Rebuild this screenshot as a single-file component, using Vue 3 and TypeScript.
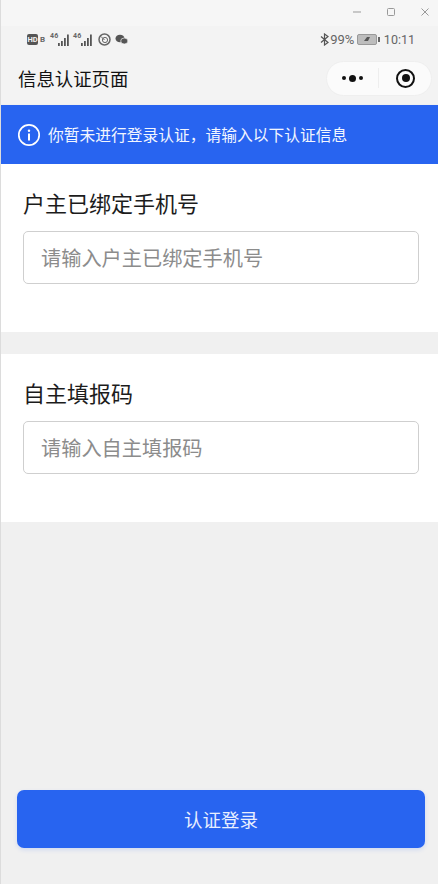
<script setup lang="ts">
const sections = [
  { label: '户主已绑定手机号', placeholder: '请输入户主已绑定手机号' },
  { label: '自主填报码', placeholder: '请输入自主填报码' },
]
</script>

<template>
  <div class="page">
    <div class="winbar">
      <svg class="winicon" width="10" height="10" viewBox="0 0 10 10"><path d="M1 5h8" stroke="#999" fill="none" /></svg>
      <svg class="winicon" width="10" height="10" viewBox="0 0 10 10"><rect x="1.5" y="1.5" width="7" height="7" rx="1" stroke="#999" fill="none" /></svg>
      <svg class="winicon" width="10" height="10" viewBox="0 0 10 10"><path d="M1.5 1.5l7 7M8.5 1.5l-7 7" stroke="#999" fill="none" /></svg>
    </div>

    <div class="status">
      <div class="status-left">
        <span class="hd">HD</span>
        <span class="b">B</span>
        <span class="signal">
          <span class="net">46</span>
          <svg width="13" height="13" viewBox="0 0 13 13"><path d="M1 10h1.800v3H1zM4 8h1.800v5H4zM7 5h1.800v8H7zM10 1.500h1.800V13H10z" fill="#555" /></svg>
        </span>
        <span class="signal">
          <span class="net">46</span>
          <svg width="13" height="13" viewBox="0 0 13 13"><path d="M1 10h1.800v3H1zM4 8h1.800v5H4zM7 5h1.800v8H7zM10 1.500h1.800V13H10z" fill="#555" /></svg>
        </span>
        <svg class="ic-a" width="13" height="13" viewBox="0 0 13 13">
          <circle cx="6.500" cy="6.500" r="5.500" fill="none" stroke="#666" stroke-width="1.500" />
          <circle cx="7" cy="7" r="2.600" fill="none" stroke="#666" />
          <path d="M3 3.500l3.500 3.500" stroke="#666" />
        </svg>
        <svg class="ic-w" width="13" height="11" viewBox="0 0 13 11">
          <ellipse cx="5" cy="4.500" rx="4.500" ry="3.800" fill="#555" />
          <ellipse cx="9.300" cy="7" rx="3.600" ry="3" fill="#555" stroke="#f3f3f3" stroke-width=".7" />
        </svg>
      </div>
      <div class="status-right">
        <svg class="bt" width="9" height="13" viewBox="0 0 9 13"><path d="M1 3.500l7 6L4.500 12V1L8 3.500 1 9.500" fill="none" stroke="#555" stroke-width="1.200" /></svg>
        <span class="pct">99%</span>
        <span class="battery"><svg width="8" height="6" viewBox="0 0 8 6"><path d="M1 5L4 1h3L5 5z" fill="#555" /></svg></span>
        <span class="nub"></span>
        <span class="time">10:11</span>
      </div>
    </div>

    <div class="nav">
      <span class="nav-title">信息认证页面</span>
      <div class="capsule">
        <div class="dots"><i class="dot"></i><i class="dot big"></i><i class="dot"></i></div>
        <span class="sep"></span>
        <div class="target"><i></i></div>
      </div>
    </div>

    <div class="banner">
      <svg width="24" height="24" viewBox="0 0 24 24">
        <circle cx="12" cy="12" r="10.200" fill="none" stroke="#fff" stroke-width="1.700" />
        <circle cx="12" cy="7.700" r="1.200" fill="#fff" />
        <rect x="11" y="10.500" width="2" height="7" fill="#fff" />
      </svg>
      <span>你暂未进行登录认证，请输入以下认证信息</span>
    </div>

    <section v-for="s in sections" :key="s.label" class="card">
      <label class="label">{{ s.label }}</label>
      <div class="field">{{ s.placeholder }}</div>
    </section>

    <div class="spacer"></div>

    <div class="footer">
      <button class="submit" type="button">认证登录</button>
    </div>
  </div>
</template>

<style>
html, body { margin: 0; padding: 0; background: #f0f0f0; }
</style>

<style scoped>
.page {
  box-sizing: border-box;
  width: 438px;
  height: 884px;
  display: flex;
  flex-direction: column;
  background: #f0f0f0;
  border-left: 1px solid #dcdcdc;
  overflow: hidden;
  font-family: "Noto Sans CJK SC", "Noto Sans", sans-serif;
}
.winbar {
  height: 26px;
  flex: none;
  background: #f6f6f6;
  display: flex;
  align-items: center;
  justify-content: flex-end;
  gap: 24px;
  padding-right: 8px;
}
.winicon { display: block; margin-top: -3px; }
.status {
  height: 26px;
  flex: none;
  background: #f3f3f3;
  display: flex;
  align-items: center;
  justify-content: space-between;
  padding: 0 23px 0 26px;
  font-family: Roboto, sans-serif;
  color: #666;
}
.status-left, .status-right { display: flex; align-items: center; }
.hd {
  box-sizing: border-box;
  flex: none;
  width: 11px;
  height: 11px;
  background: #555;
  color: #f3f3f3;
  font-size: 7.500px;
  font-weight: 700;
  line-height: 11px;
  border-radius: 2px;
  text-align: center;
}
.b { font-size: 8px; margin: 0 5px 0 2px; font-weight: 700; }
.signal { display: flex; align-items: flex-end; margin-right: 3px; width: 20px; }
.net { font-size: 7px; line-height: 7px; font-weight: 700; align-self: flex-start; width: 7px; }
.ic-a { margin: 0 4px 0 2px; }
.status-right { font-size: 12.500px; color: #666; }
.pct { margin-left: 1px; font-size: 13px; }
.battery {
  box-sizing: border-box;
  width: 20px;
  height: 11px;
  margin-left: 3px;
  background: #bdbdbd;
  border: 1px solid #999;
  border-radius: 2px;
  display: flex;
  align-items: center;
  justify-content: center;
}
.nub { width: 1.500px; height: 5px; background: #666; margin: 0 4px 0 1px; }
.nav {
  height: 52px;
  flex: none;
  background: #f3f3f3;
  display: flex;
  align-items: center;
  justify-content: space-between;
  padding: 0 6px 0 17px;
  box-sizing: border-box;
}
.nav-title { font-size: 18.400px; color: #111; }
.capsule {
  box-sizing: border-box;
  width: 106px;
  height: 35px;
  border-radius: 18px;
  background: #fbfbfb;
  border: 1px solid #efefef;
  display: flex;
  align-items: center;
}
.dots { flex: 1; display: flex; align-items: center; justify-content: center; gap: 3px; }
.dot { width: 4px; height: 4px; border-radius: 50%; background: #111; }
.dot.big { width: 7px; height: 7px; }
.sep { width: 1px; height: 20px; background: #eee; }
.target {
  flex: 1;
  display: flex;
  align-items: center;
  justify-content: center;
  padding-left: 2px;
}
.target i {
  box-sizing: border-box;
  width: 19px;
  height: 19px;
  border-radius: 50%;
  border: 2.500px solid #111;
  display: flex;
  align-items: center;
  justify-content: center;
}
.target i::after {
  content: "";
  width: 8px;
  height: 8px;
  border-radius: 50%;
  background: #111;
}
.banner {
  height: 59px;
  flex: none;
  margin-top: 1px;
  background: #2864f0;
  color: #f2f6ff;
  display: flex;
  align-items: center;
  gap: 7px;
  padding-left: 16px;
  font-size: 15.750px;
}
.card {
  box-sizing: border-box;
  height: 168px;
  flex: none;
  background: #fff;
  padding: 21px 19px 0 22px;
  display: flex;
  flex-direction: column;
}
.card + .card { margin-top: 22px; }
.label { font-size: 22px; line-height: 34px; color: #1c1c1c; }
.field {
  box-sizing: border-box;
  height: 53px;
  margin-top: 12px;
  border: 1px solid #cfcfcf;
  border-radius: 5px;
  padding-left: 17px;
  display: flex;
  align-items: center;
  font-size: 20.200px;
  color: #8c8c8c;
}
.spacer { flex: 1; }
.footer { padding: 0 13px 36px 16px; }
.submit {
  display: block;
  width: 100%;
  height: 58px;
  border: 0;
  border-radius: 7px;
  background: #2864f0;
  color: #e8efff;
  font: inherit;
  font-size: 18.500px;
  box-shadow: 0 2px 4px rgba(42, 101, 245, .15);
}
</style>
